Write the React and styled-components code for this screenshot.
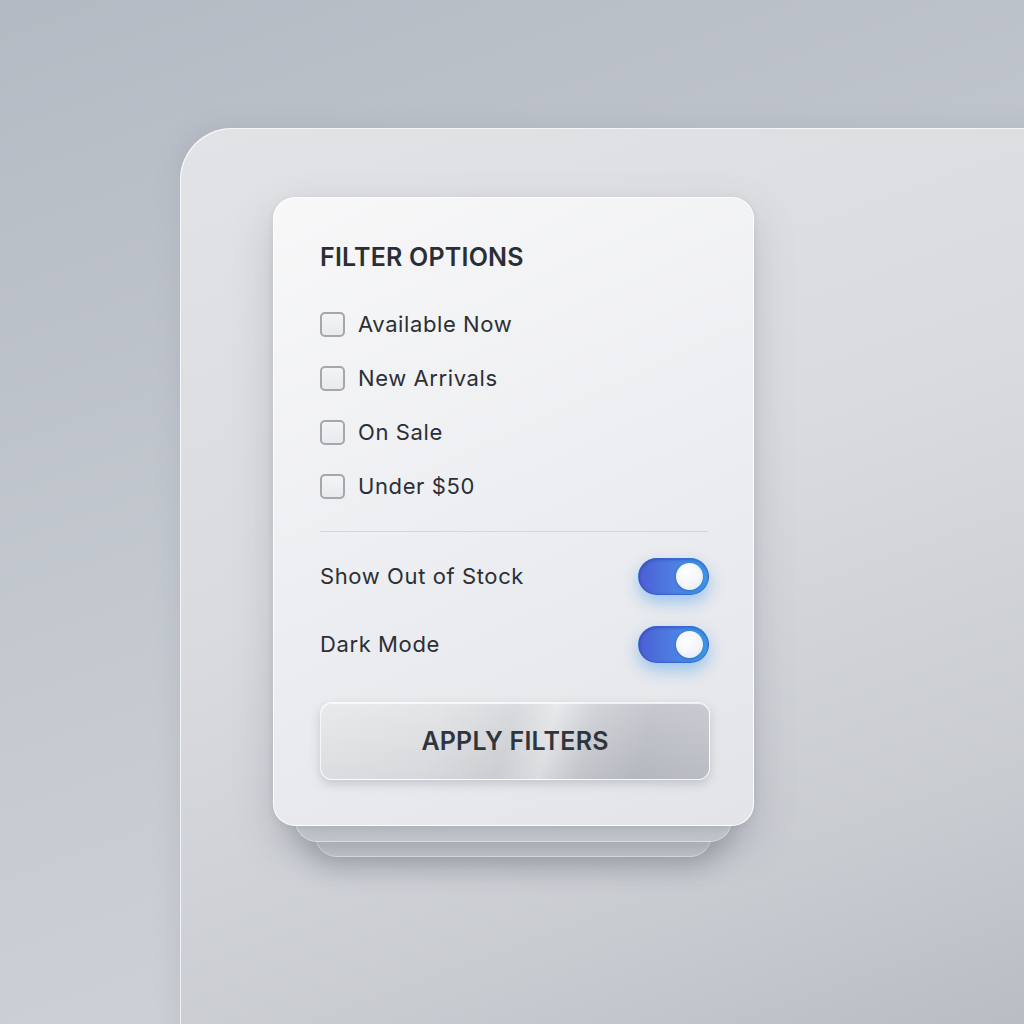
import styled, { createGlobalStyle } from 'styled-components';

const GlobalStyle = createGlobalStyle`
  html, body {
    margin: 0;
    padding: 0;
  }
  body {
    width: 1024px;
    height: 1024px;
    overflow: hidden;
    font-family: Inter, "Noto Sans", sans-serif;
    background: linear-gradient(160deg, #b4bac3 0%, #c3c8cf 45%, #d3d6db 100%);
  }
`;

const checks = ['Available Now', 'New Arrivals', 'On Sale', 'Under $50'];
const toggles = ['Show Out of Stock', 'Dark Mode'];

const App = () => {
  return (
    <Page>
      <GlobalStyle />
      <Backdrop>
        <Stack>
          <Card>
            <Title>FILTER OPTIONS</Title>
            <CheckList>
              {checks.map(label => (
                <CheckRow key={label}>
                  <Box />
                  <span>{label}</span>
                </CheckRow>
              ))}
            </CheckList>
            <Divider />
            <ToggleList>
              {toggles.map(label => (
                <ToggleRow key={label}>
                  <span>{label}</span>
                  <Toggle>
                    <Knob />
                  </Toggle>
                </ToggleRow>
              ))}
            </ToggleList>
            <ApplyButton>APPLY FILTERS</ApplyButton>
          </Card>
          <Layer $inset={22} $drop={16} $z={2} />
          <Layer $inset={42} $drop={31} $z={1} />
        </Stack>
      </Backdrop>
    </Page>
  );
};

const Page = styled.div`
  width: 1024px;
  height: 1024px;
  padding: 128px 0 0 180px;
  box-sizing: border-box;
  overflow: hidden;
`;

const Backdrop = styled.div`
  width: 900px;
  height: 960px;
  box-sizing: border-box;
  padding: 69px 0 0 93px;
  border-radius: 52px 0 0 0;
  background: linear-gradient(160deg, #e1e3e6 0%, #d9dbdf 40%, #c8cbd0 75%, #b4b8bf 100%);
  box-shadow: inset 1px 1px 0 rgba(255, 255, 255, 0.7), -6px -4px 20px rgba(120, 128, 140, 0.15);
`;

const Stack = styled.div`
  position: relative;
  width: 481px;
`;

const Layer = styled.div`
  position: absolute;
  left: ${p => p.$inset}px;
  right: ${p => p.$inset}px;
  top: 40px;
  bottom: -${p => p.$drop}px;
  z-index: ${p => p.$z};
  border-radius: 22px;
  background: linear-gradient(180deg, #dcdee2 0%, #d1d4d9 100%);
  border: 1px solid rgba(255, 255, 255, 0.55);
  box-shadow: 0 12px 26px rgba(90, 98, 112, 0.28);
`;

const Card = styled.div`
  position: relative;
  z-index: 3;
  height: 629px;
  box-sizing: border-box;
  padding: 44px 45px 0 46px;
  border-radius: 22px;
  background: linear-gradient(155deg, #f8f8f9 0%, #eeeff2 45%, #e2e4e8 100%);
  border: 1px solid rgba(255, 255, 255, 0.9);
  box-shadow: 0 18px 40px rgba(90, 98, 112, 0.25), 0 2px 6px rgba(90, 98, 112, 0.12);
  color: #2b2f36;
`;

const Title = styled.h2`
  margin: 0;
  font-size: 25px;
  line-height: 31px;
  font-weight: 600;
  letter-spacing: 0.2px;
  color: #2a2e35;
`;

const CheckList = styled.div`
  margin-top: 24px;
  display: flex;
  flex-direction: column;
`;

const CheckRow = styled.div`
  height: 54px;
  display: flex;
  align-items: center;
  gap: 13px;
  font-size: 22px;
  letter-spacing: 0.6px;
  color: #2b2f36;
`;

const Box = styled.div`
  width: 25px;
  height: 25px;
  box-sizing: border-box;
  border: 2px solid #a3a7ae;
  border-radius: 5px;
  background: linear-gradient(180deg, #f3f4f6, #e9eaed);
`;

const Divider = styled.div`
  margin-top: 18px;
  height: 1px;
  background: #d2d5da;
`;

const ToggleList = styled.div`
  margin-top: 10px;
  display: flex;
  flex-direction: column;
`;

const ToggleRow = styled.div`
  height: 68px;
  display: flex;
  align-items: center;
  justify-content: space-between;
  font-size: 22px;
  letter-spacing: 0.6px;
  color: #2b2f36;
`;

const Toggle = styled.div`
  width: 71px;
  height: 37px;
  margin-right: -1px;
  box-sizing: border-box;
  padding: 5px 5px;
  border-radius: 19px;
  display: flex;
  justify-content: flex-end;
  align-items: center;
  background: linear-gradient(90deg, #4c5fd4 0%, #4d7fe2 50%, #3a9ef0 100%);
  border: 1px solid rgba(40, 80, 190, 0.5);
  box-shadow: 0 7px 16px rgba(58, 150, 240, 0.45), inset 0 1px 3px rgba(20, 30, 110, 0.35);
`;

const Knob = styled.div`
  width: 27px;
  height: 27px;
  border-radius: 50%;
  background: radial-gradient(circle at 40% 35%, #ffffff 0%, #f2f5f9 55%, #dde5f0 100%);
  box-shadow: 0 1px 3px rgba(20, 40, 90, 0.35);
`;

const ApplyButton = styled.button`
  margin-top: 24px;
  width: 390px;
  height: 78px;
  border-radius: 12px;
  border: 1px solid rgba(255, 255, 255, 0.85);
  background:
    linear-gradient(180deg, rgba(255, 255, 255, 0.15) 0%, rgba(0, 0, 0, 0.04) 100%),
    linear-gradient(
      105deg,
      #e6e7ea 0%,
      #dfe1e4 30%,
      #d3d5d9 48%,
      #e3e5e8 58%,
      #c9ccd1 68%,
      #bcbfc6 82%,
      #c1c4ca 100%
    );
  box-shadow: 0 4px 10px rgba(90, 98, 112, 0.25), inset 0 1px 0 rgba(255, 255, 255, 0.7);
  font-family: Inter, "Noto Sans", sans-serif;
  font-size: 25px;
  font-weight: 600;
  color: #30343b;
  letter-spacing: 0.2px;
  cursor: pointer;
`;

export default App;
